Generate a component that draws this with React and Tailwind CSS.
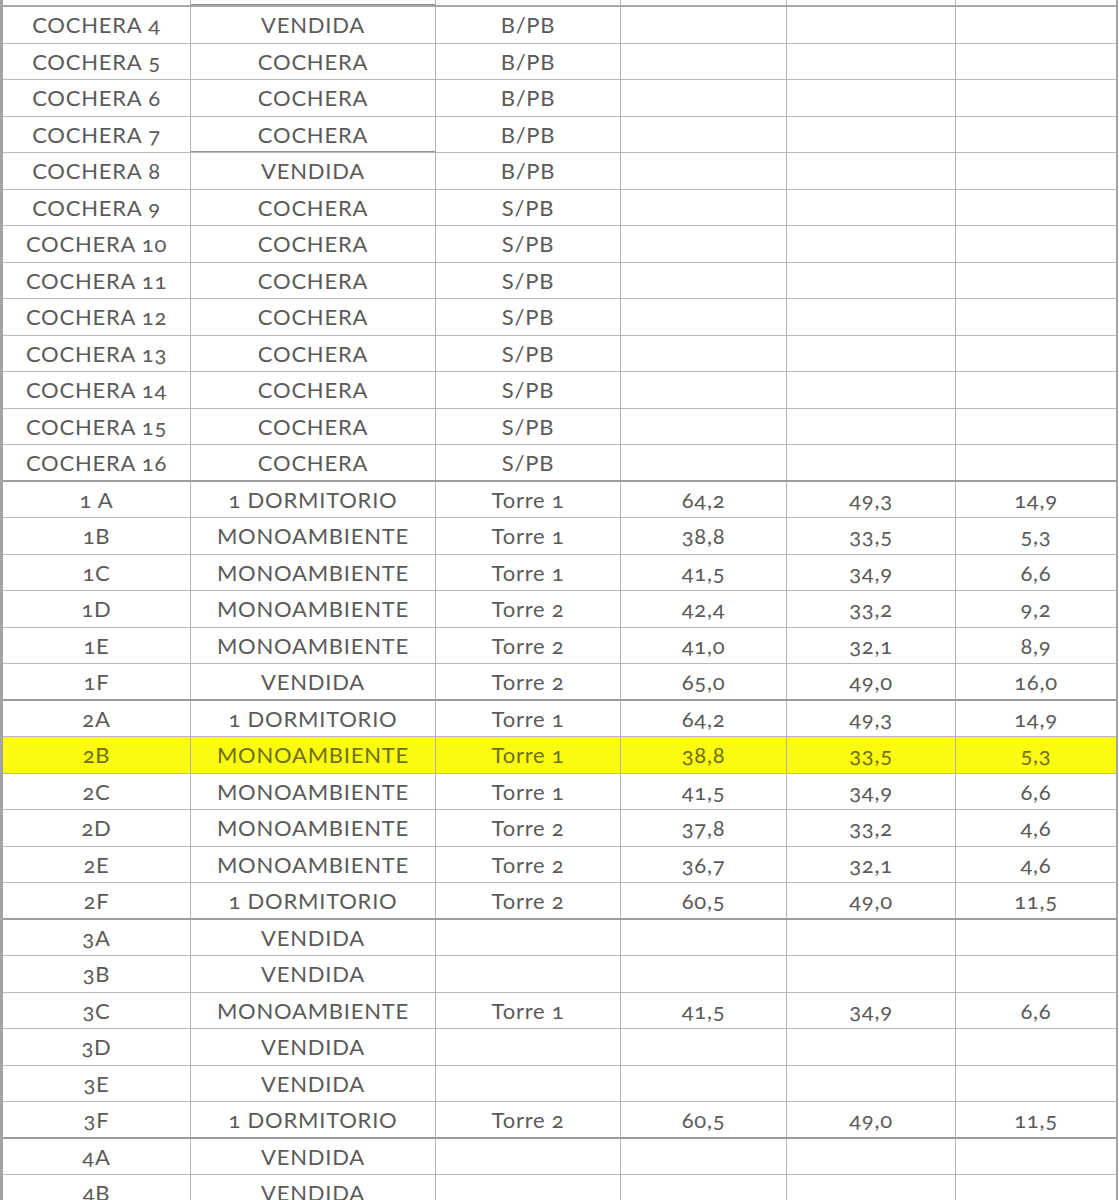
const COLS = ["w-[188px]", "w-[245px]", "w-[185px]", "w-[166px]", "w-[169px]", "w-[160px]"];

const rows = [
  ["COCHERA 4", "VENDIDA", "B/PB"],
  ["COCHERA 5", "COCHERA", "B/PB"],
  ["COCHERA 6", "COCHERA", "B/PB"],
  ["COCHERA 7", "COCHERA", "B/PB", "", "", "", { boxBottom: true }],
  ["COCHERA 8", "VENDIDA", "B/PB"],
  ["COCHERA 9", "COCHERA", "S/PB"],
  ["COCHERA 10", "COCHERA", "S/PB"],
  ["COCHERA 11", "COCHERA", "S/PB"],
  ["COCHERA 12", "COCHERA", "S/PB"],
  ["COCHERA 13", "COCHERA", "S/PB"],
  ["COCHERA 14", "COCHERA", "S/PB"],
  ["COCHERA 15", "COCHERA", "S/PB"],
  ["COCHERA 16", "COCHERA", "S/PB", "", "", "", { groupEnd: true }],
  ["1 A", "1 DORMITORIO", "Torre 1", "64,2", "49,3", "14,9"],
  ["1B", "MONOAMBIENTE", "Torre 1", "38,8", "33,5", "5,3"],
  ["1C", "MONOAMBIENTE", "Torre 1", "41,5", "34,9", "6,6"],
  ["1D", "MONOAMBIENTE", "Torre 2", "42,4", "33,2", "9,2"],
  ["1E", "MONOAMBIENTE", "Torre 2", "41,0", "32,1", "8,9"],
  ["1F", "VENDIDA", "Torre 2", "65,0", "49,0", "16,0", { groupEnd: true }],
  ["2A", "1 DORMITORIO", "Torre 1", "64,2", "49,3", "14,9"],
  ["2B", "MONOAMBIENTE", "Torre 1", "38,8", "33,5", "5,3", { highlight: true }],
  ["2C", "MONOAMBIENTE", "Torre 1", "41,5", "34,9", "6,6"],
  ["2D", "MONOAMBIENTE", "Torre 2", "37,8", "33,2", "4,6"],
  ["2E", "MONOAMBIENTE", "Torre 2", "36,7", "32,1", "4,6"],
  ["2F", "1 DORMITORIO", "Torre 2", "60,5", "49,0", "11,5", { groupEnd: true }],
  ["3A", "VENDIDA"],
  ["3B", "VENDIDA"],
  ["3C", "MONOAMBIENTE", "Torre 1", "41,5", "34,9", "6,6"],
  ["3D", "VENDIDA"],
  ["3E", "VENDIDA"],
  ["3F", "1 DORMITORIO", "Torre 2", "60,5", "49,0", "11,5", { groupEnd: true }],
  ["4A", "VENDIDA"],
  ["4B", "VENDIDA"],
];

function Row({ data }) {
  const last = data[data.length - 1];
  const opts = typeof last === "object" ? last : {};
  const cells = [0, 1, 2, 3, 4, 5].map((i) => (typeof data[i] === "string" ? data[i] : ""));

  return (
    <div
      className={
        "flex h-[36.5px] shrink-0 " +
        (opts.groupEnd ? "border-b-2 border-[#9c9c9c] " : "border-b border-[#b9b9b9] ") +
        (opts.highlight ? "bg-[#fbfb12] text-[#6f6f14]" : "text-[#5a5a5a]")
      }
    >
      {cells.map((text, i) => (
        <div
          key={i}
          className={
            COLS[i] +
            " flex items-center justify-center whitespace-nowrap " +
            (i < 5 ? "border-r border-[#b4b4b4] " : "") +
            (opts.boxBottom && i === 1 ? "shadow-[inset_0_-1px_0_#8f8f8f]" : "")
          }
        >
          {text}
        </div>
      ))}
    </div>
  );
}

export default function App() {
  return (
    <div className="w-[1119px] h-[1200px] overflow-hidden bg-white font-['Lato','Liberation_Sans',sans-serif] text-[22px] tracking-[0.035em] oldstyle-nums">
      <div className="w-[1118px] border-l-[3px] border-r-2 border-[#a3a3a3] flex flex-col">
        {/* cut-off row above */}
        <div className="flex h-[7px] shrink-0 border-b-2 border-[#a8a8a8]">
          {COLS.map((w, i) => (
            <div
              key={i}
              className={w + (i < 5 ? " border-r border-[#b4b4b4]" : "") + (i === 1 ? " shadow-[inset_0_-1px_0_#8f8f8f]" : "")}
            />
          ))}
        </div>
        {rows.map((r, i) => (
          <Row key={i} data={r} />
        ))}
      </div>
    </div>
  );
}
